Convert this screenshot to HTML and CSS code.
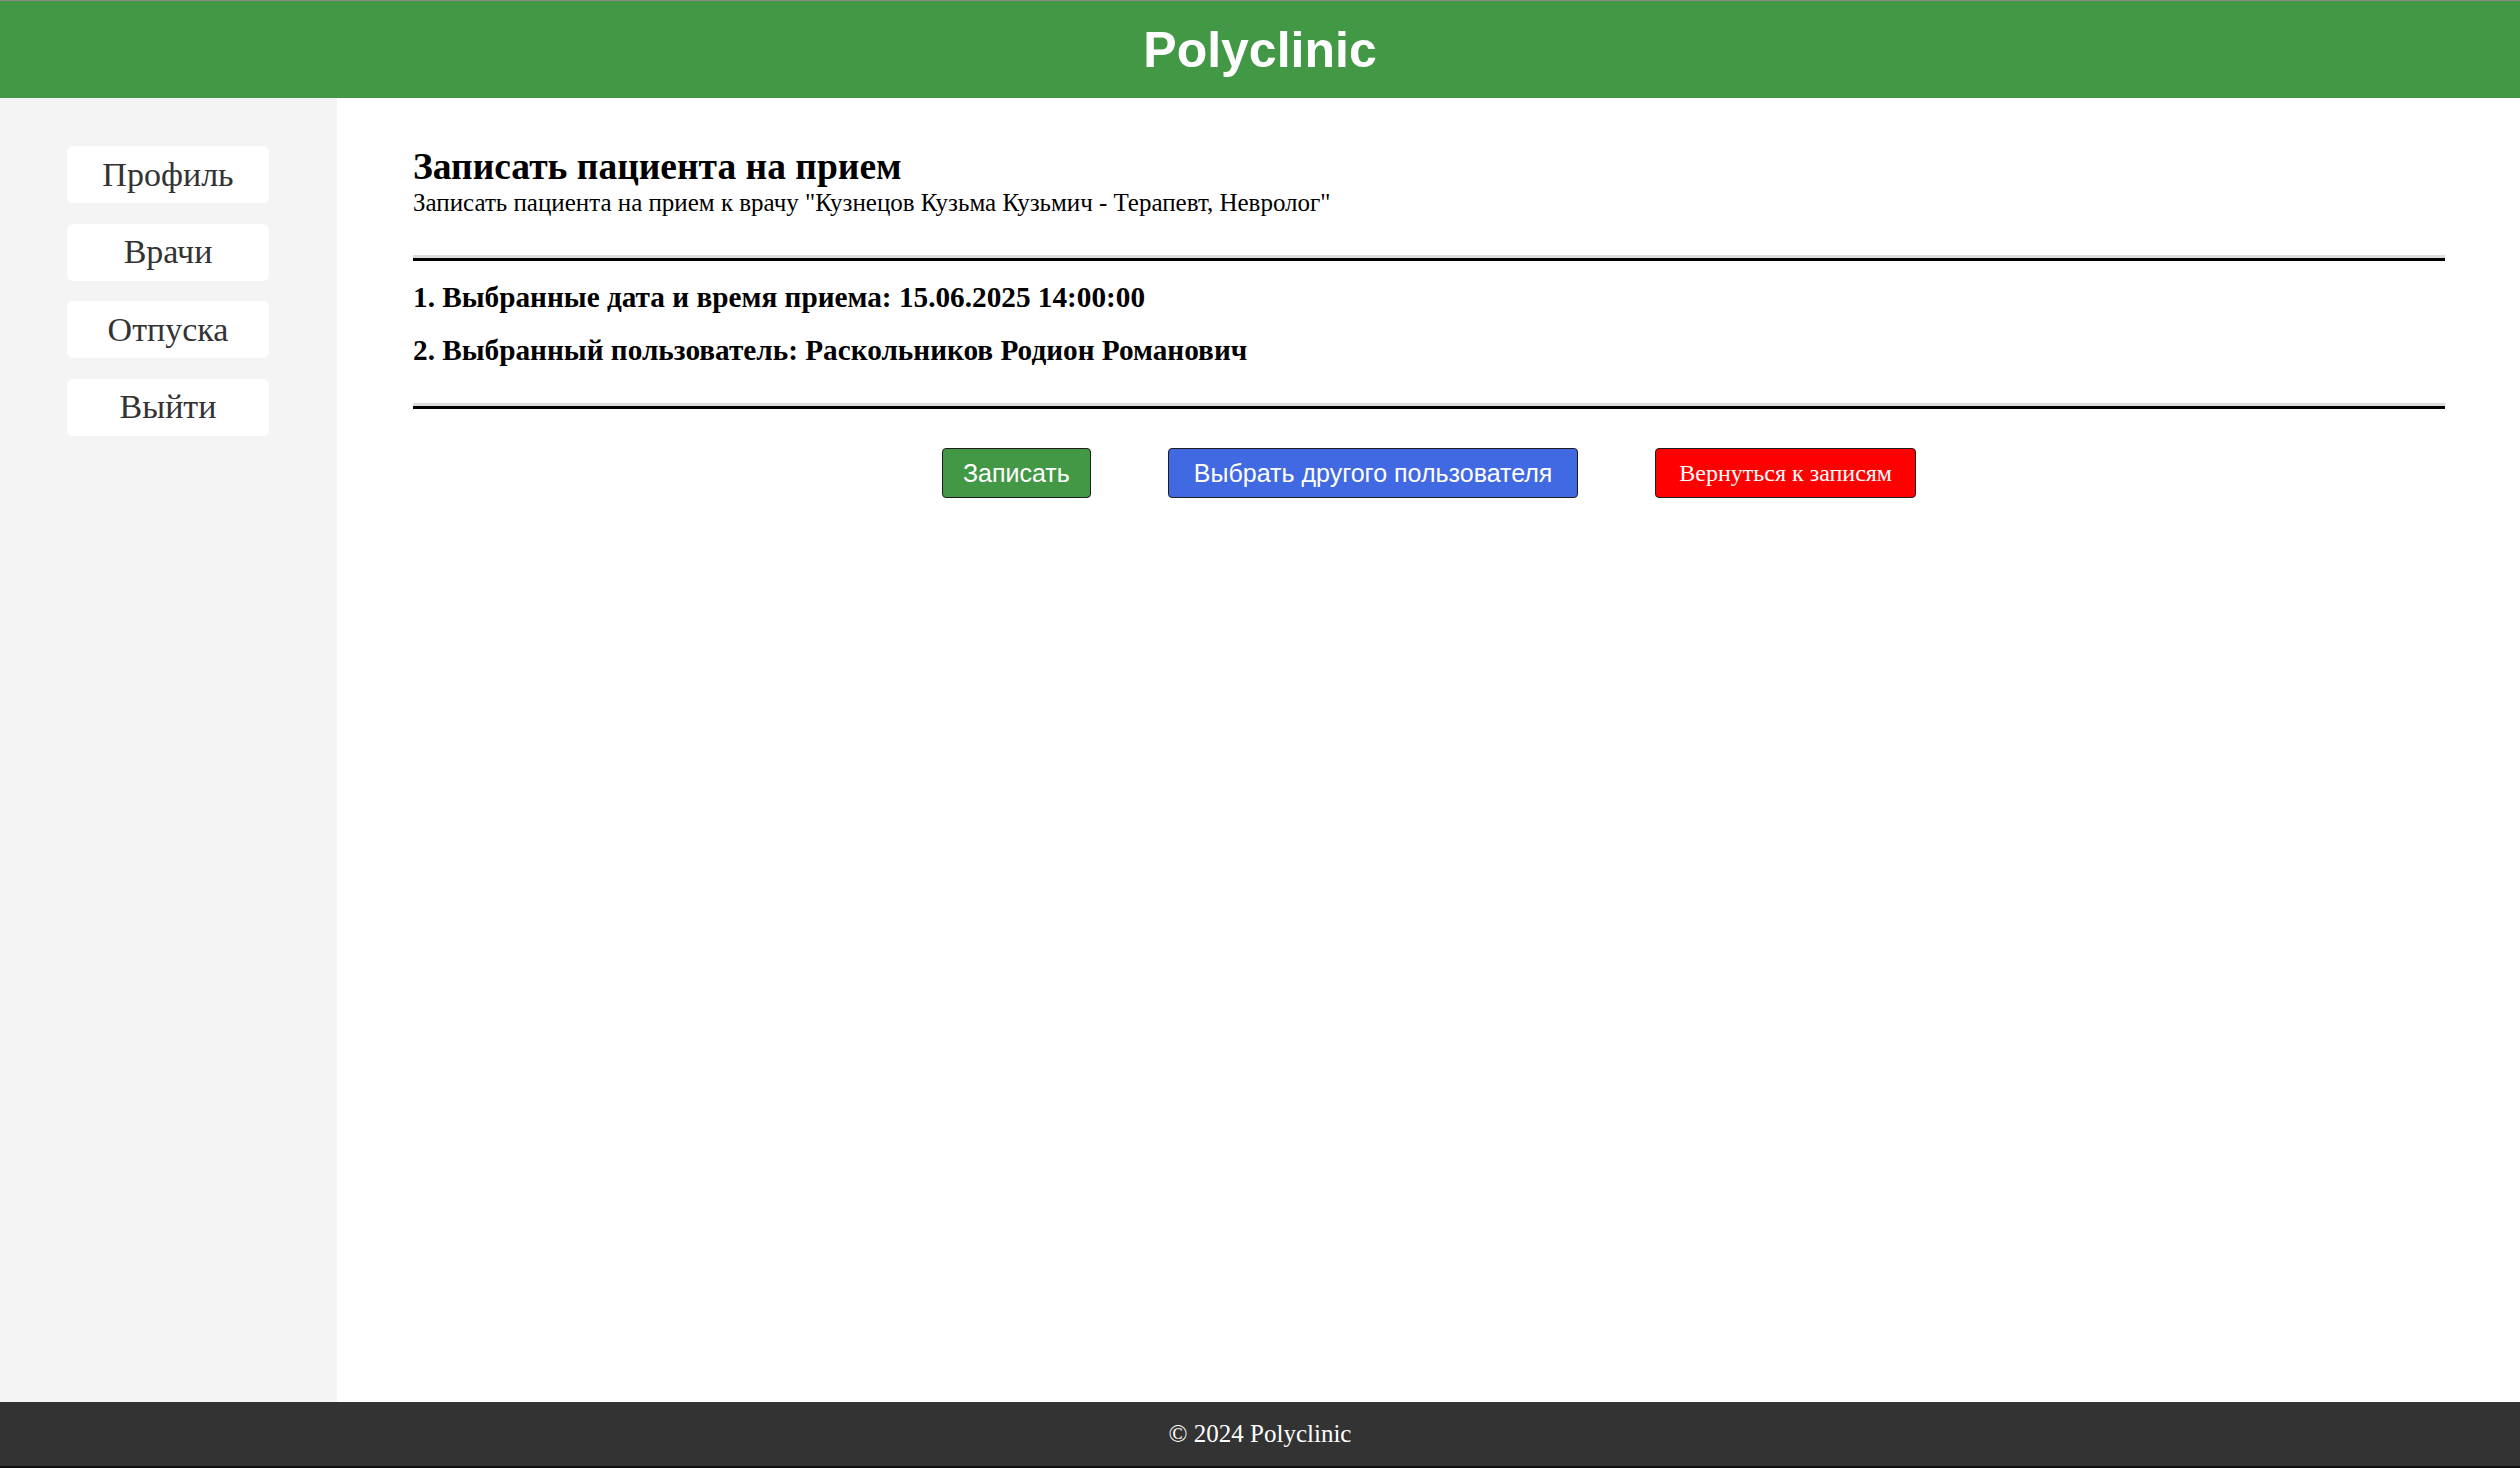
FILE: index.html
```html
<!DOCTYPE html>
<html lang="ru">
<head>
<meta charset="utf-8">
<title>Polyclinic</title>
<link rel="stylesheet" href="styles.css">
</head>
<body>
<div class="page">
  <header class="topbar">
    <h1 class="brand">Polyclinic</h1>
  </header>
  <div class="layout">
    <aside class="sidebar">
      <a class="nav-btn" href="#">Профиль</a>
      <a class="nav-btn" href="#">Врачи</a>
      <a class="nav-btn" href="#">Отпуска</a>
      <a class="nav-btn" href="#">Выйти</a>
    </aside>
    <main class="content">
      <h2 class="title">Записать пациента на прием</h2>
      <p class="subtitle">Записать пациента на прием к врачу "Кузнецов Кузьма Кузьмич - Терапевт, Невролог"</p>
      <hr class="divider divider-top">
      <h3 class="step step-one">1. Выбранные дата и время приема: 15.06.2025 14:00:00</h3>
      <h3 class="step step-two">2. Выбранный пользователь: Раскольников Родион Романович</h3>
      <hr class="divider divider-bottom">
      <div class="actions">
        <button class="btn btn-green" type="button">Записать</button>
        <button class="btn btn-blue" type="button">Выбрать другого пользователя</button>
        <button class="btn btn-red" type="button">Вернуться к записям</button>
      </div>
    </main>
  </div>
  <footer class="footer">© 2024 Polyclinic</footer>
</div>
</body>
</html>
```
FILE: styles.css
```css
html, body {
  margin: 0;
  padding: 0;
}

body {
  font-family: "Liberation Serif", "Times New Roman", serif;
  font-size: 25px;
  color: #000;
  background: #fff;
}

.page {
  display: flex;
  flex-direction: column;
  min-height: 100vh;
}

.topbar {
  background: #439846;
  border-top: 1px solid #8a8a8a;
  height: 97px;
  display: flex;
  align-items: center;
  justify-content: center;
}

.brand {
  margin: 0;
  font-family: "Liberation Sans", Arial, sans-serif;
  font-size: 50px;
  font-weight: bold;
  color: #fff;
  line-height: 1;
}

.layout {
  flex: 1;
  display: flex;
}

.sidebar {
  width: 337px;
  flex: none;
  background: #f4f4f4;
  padding-top: 48px;
  display: flex;
  flex-direction: column;
  align-items: flex-start;
  gap: 20.5px;
  box-sizing: border-box;
  padding-left: 67px;
}

.nav-btn {
  width: 202px;
  height: 57px;
  background: #fff;
  border-radius: 6px;
  color: #333;
  text-decoration: none;
  font-size: 34px;
  display: flex;
  align-items: center;
  justify-content: center;
}

.content {
  flex: 1;
  padding: 47px 75px 0 76px;
  display: flex;
  flex-direction: column;
}

.title {
  margin: 0;
  font-size: 37.5px;
  font-weight: bold;
  line-height: 43px;
}

.subtitle {
  margin: 0;
  font-size: 25px;
  line-height: 29px;
}

.divider {
  margin: 0;
  height: 0;
  border: none;
  border-top: 3px solid #dcdcdc;
  border-bottom: 3px solid #000;
}

.divider-top {
  margin-top: 38px;
}

.step {
  margin: 0;
  font-size: 29.25px;
  font-weight: bold;
  line-height: 33px;
}

.step-one {
  margin-top: 19.5px;
}

.step-two {
  margin-top: 20px;
}

.divider-bottom {
  margin-top: 36.5px;
}

.actions {
  margin-top: 39px;
  display: flex;
  justify-content: center;
  gap: 77px;
}

.btn {
  font-family: "Liberation Sans", Arial, sans-serif;
  font-size: 25px;
  color: #fff;
  height: 50px;
  padding: 0 23px;
  border: 1px solid #1e1e1e;
  border-radius: 4px;
  line-height: 1;
}

.btn-green {
  background: #439846;
  padding: 0 20px;
}

.btn-blue {
  background: #4169e1;
  padding: 0 25px;
}

.btn-red {
  background: #ff0000;
  font-family: "Liberation Serif", "Times New Roman", serif;
  font-size: 24px;
}

.footer {
  background: #333;
  color: #fff;
  height: 66px;
  display: flex;
  align-items: center;
  justify-content: center;
  font-size: 25px;
  border-bottom: 2px solid #111;
  box-sizing: border-box;
}
```
